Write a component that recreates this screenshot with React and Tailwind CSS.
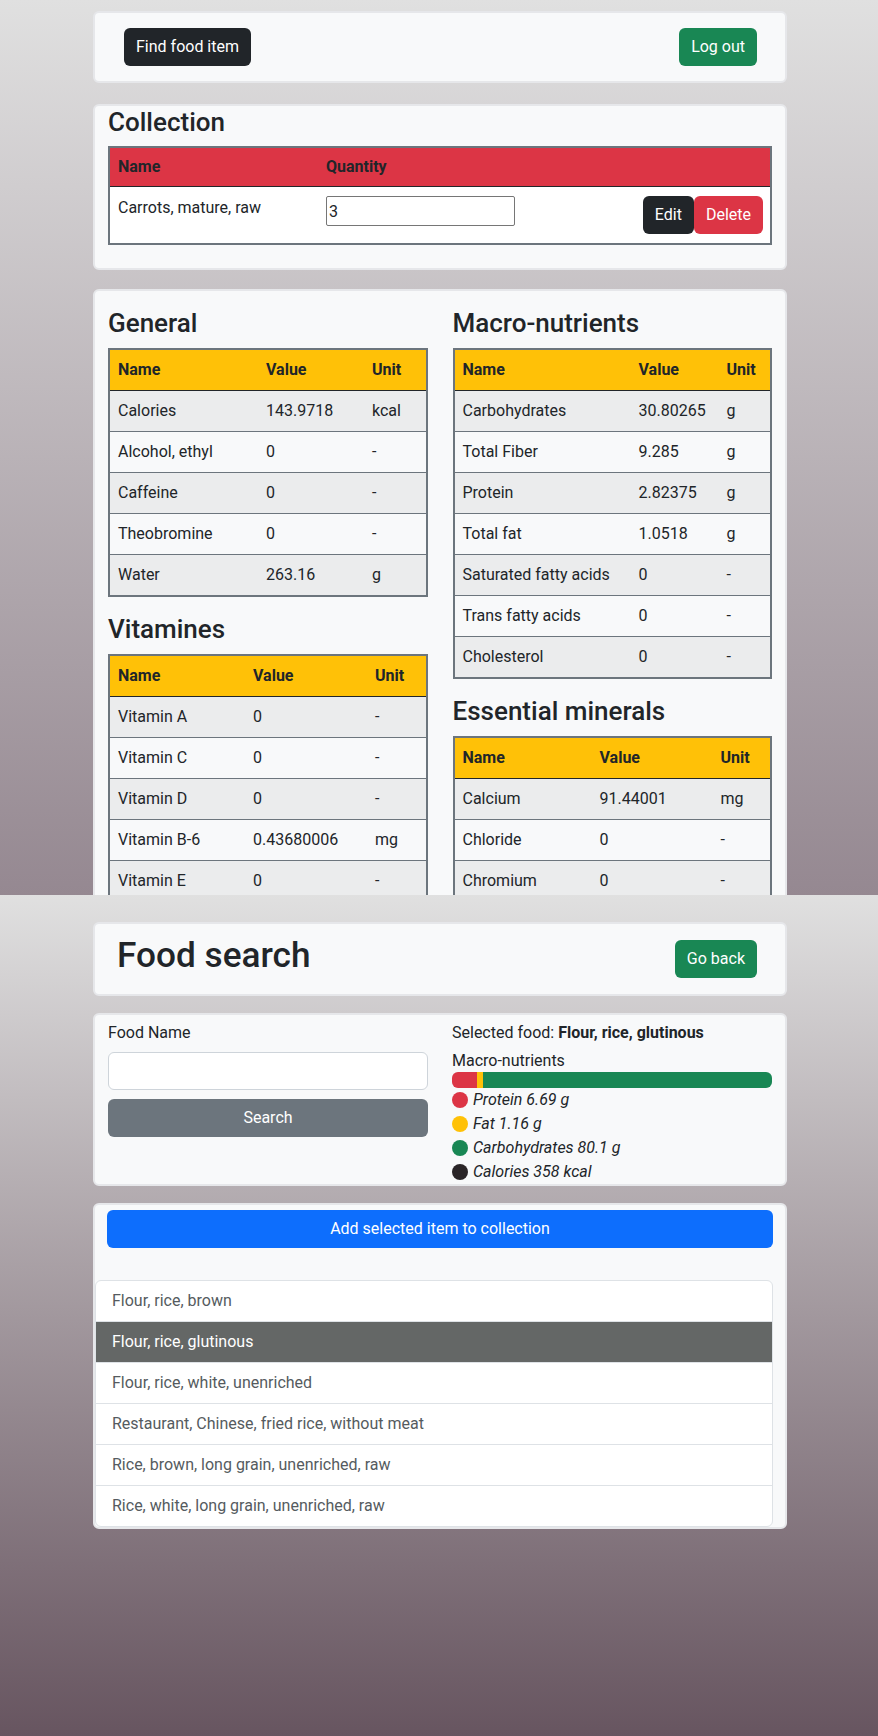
import React from 'react';

const general = [
  ['Calories', '143.9718', 'kcal'],
  ['Alcohol, ethyl', '0', '-'],
  ['Caffeine', '0', '-'],
  ['Theobromine', '0', '-'],
  ['Water', '263.16', 'g'],
];

const vitamines = [
  ['Vitamin A', '0', '-'],
  ['Vitamin C', '0', '-'],
  ['Vitamin D', '0', '-'],
  ['Vitamin B-6', '0.43680006', 'mg'],
  ['Vitamin E', '0', '-'],
  ['Vitamin K', '0', '-'],
  ['Vitamin B-12', '0', '-'],
];

const macro = [
  ['Carbohydrates', '30.80265', 'g'],
  ['Total Fiber', '9.285', 'g'],
  ['Protein', '2.82375', 'g'],
  ['Total fat', '1.0518', 'g'],
  ['Saturated fatty acids', '0', '-'],
  ['Trans fatty acids', '0', '-'],
  ['Cholesterol', '0', '-'],
];

const minerals = [
  ['Calcium', '91.44001', 'mg'],
  ['Chloride', '0', '-'],
  ['Chromium', '0', '-'],
  ['Copper', '0', '-'],
];

const results = [
  'Flour, rice, brown',
  'Flour, rice, glutinous',
  'Flour, rice, white, unenriched',
  'Restaurant, Chinese, fried rice, without meat',
  'Rice, brown, long grain, unenriched, raw',
  'Rice, white, long grain, unenriched, raw',
];

const legend = [
  { color: 'bg-[#dc3545]', label: 'Protein 6.69 g' },
  { color: 'bg-[#ffc107]', label: 'Fat 1.16 g' },
  { color: 'bg-[#198754]', label: 'Carbohydrates 80.1 g' },
  { color: 'bg-[#2a2527]', label: 'Calories 358 kcal' },
];

function Card({ className = '', children }) {
  return (
    <div className={`rounded-md border-2 border-[#e6e7ea] bg-[#f8f9fa] ${className}`}>
      {children}
    </div>
  );
}

function Btn({ className = '', children }) {
  return (
    <button className={`h-[38px] rounded-md px-3 text-base leading-6 text-white ${className}`}>
      {children}
    </button>
  );
}

function NutrientTable({ title, cols, rows }) {
  return (
    <div>
      <h3 className="mb-2 text-[26px] font-medium leading-[33px]">{title}</h3>
      <div className="mb-4 border-2 border-[#6c757d]">
        <div className={`grid ${cols} border-b border-[#212529] bg-[#ffc107] font-bold`}>
          <div className="px-2 py-2">Name</div>
          <div className="px-2 py-2">Value</div>
          <div className="px-2 py-2">Unit</div>
        </div>
        {rows.map((r, i) => (
          <div
            key={r[0]}
            className={`grid ${cols} ${i % 2 === 0 ? 'bg-[#ebeced]' : 'bg-[#f8f9fa]'} ${
              i < rows.length - 1 ? 'border-b border-[#6c757d]' : ''
            }`}
          >
            <div className="px-2 py-2">{r[0]}</div>
            <div className="px-2 py-2">{r[1]}</div>
            <div className="px-2 py-2">{r[2]}</div>
          </div>
        ))}
      </div>
    </div>
  );
}

export default function App() {
  return (
    <div className="font-['Roboto',sans-serif] text-base leading-6 text-[#212529]">
      {/* Collection page */}
      <section className="h-[895px] overflow-hidden bg-linear-to-b from-[#e0e0e0] to-[#958891] pt-[11px]">
        <div className="ml-[93px] w-[694px]">
          <Card className="flex h-[72px] items-center justify-between pl-[29px] pr-[28px]">
            <Btn className="bg-[#212529]">Find food item</Btn>
            <Btn className="bg-[#198754]">Log out</Btn>
          </Card>

          <Card className="mt-[21px] px-[13px] pb-[7px]">
            <h3 className="mb-[7px] text-[26px] font-medium leading-[33px]">Collection</h3>
            <div className="mb-4 border-2 border-[#6c757d]">
              <div className="grid grid-cols-[208px_207px_1fr] border-b border-[#212529] bg-[#dc3545] font-bold">
                <div className="px-2 py-[7px]">Name</div>
                <div className="px-2 py-[7px]">Quantity</div>
                <div className="px-2 py-[7px]"></div>
              </div>
              <div className="grid grid-cols-[208px_207px_1fr] bg-white">
                <div className="px-2 py-[9px]">Carrots, mature, raw</div>
                <div className="px-2 py-[9px]">
                  <input
                    defaultValue="3"
                    className="h-[30px] w-[189px] rounded-[2px] border border-[#767676] bg-white px-[2px] text-base"
                  />
                </div>
                <div className="flex justify-end py-[9px] pr-[7px]">
                  <Btn className="bg-[#212529]">Edit</Btn>
                  <Btn className="bg-[#dc3545]">Delete</Btn>
                </div>
              </div>
            </div>
          </Card>

          <Card className="mt-[19px] grid grid-cols-2 gap-x-[25px] px-[13px] pt-[16px]">
            <div>
              <NutrientTable title="General" cols="grid-cols-[148px_106px_1fr]" rows={general} />
              <NutrientTable title="Vitamines" cols="grid-cols-[135px_122px_1fr]" rows={vitamines} />
            </div>
            <div>
              <NutrientTable title="Macro-nutrients" cols="grid-cols-[176px_88px_1fr]" rows={macro} />
              <NutrientTable title="Essential minerals" cols="grid-cols-[137px_121px_1fr]" rows={minerals} />
            </div>
          </Card>
        </div>
      </section>

      {/* Food search page */}
      <section className="h-[841px] overflow-hidden bg-linear-to-b from-[#e0e0e0] to-[#675560] pt-[27px]">
        <div className="ml-[93px] w-[694px]">
          <Card className="flex h-[74px] items-center justify-between pl-[22px] pr-[28px]">
            <h1 className="mb-2 text-[35.2px] font-medium leading-[42px]">Food search</h1>
            <Btn className="bg-[#198754]">Go back</Btn>
          </Card>

          <Card className="mt-[17px] grid grid-cols-[320px_1fr] gap-x-[24px] px-[13px] pt-[6px]">
            <div>
              <label className="mb-[7px] block">Food Name</label>
              <input className="block h-[38px] w-full rounded-md border border-[#ced4da] bg-white px-3" />
              <button className="mt-[9px] h-[38px] w-full rounded-md bg-[#6c757d] text-white">Search</button>
            </div>
            <div>
              <div>
                Selected food: <b className="font-bold">Flour, rice, glutinous</b>
              </div>
              <div className="mt-1 leading-[23px]">Macro-nutrients</div>
              <div className="flex h-4 overflow-hidden rounded-md bg-[#e9ecef]">
                <div className="w-[7.8%] bg-[#dc3545]"></div>
                <div className="w-[1.9%] bg-[#ffc107]"></div>
                <div className="flex-1 bg-[#198754]"></div>
              </div>
              {legend.map((l) => (
                <div key={l.label} className="flex items-center italic">
                  <span className={`mr-[5px] inline-block h-4 w-4 rounded-full ${l.color}`}></span>
                  {l.label}
                </div>
              ))}
            </div>
          </Card>

          <Card className="mt-[17px] px-3 pt-[5px]">
            <Btn className="w-full bg-[#0d6efd]">Add selected item to collection</Btn>
            <div className="ml-[-12px] mt-8 overflow-hidden rounded-md border border-[#dee2e6] bg-white">
              {results.map((r, i) => (
                <div
                  key={r}
                  className={`px-4 py-2 ${i < results.length - 1 ? 'border-b border-[#dee2e6]' : ''} ${
                    i === 1 ? 'bg-[#646766] text-white' : 'text-[#555b60]'
                  }`}
                >
                  {r}
                </div>
              ))}
            </div>
          </Card>
        </div>
      </section>
    </div>
  );
}
